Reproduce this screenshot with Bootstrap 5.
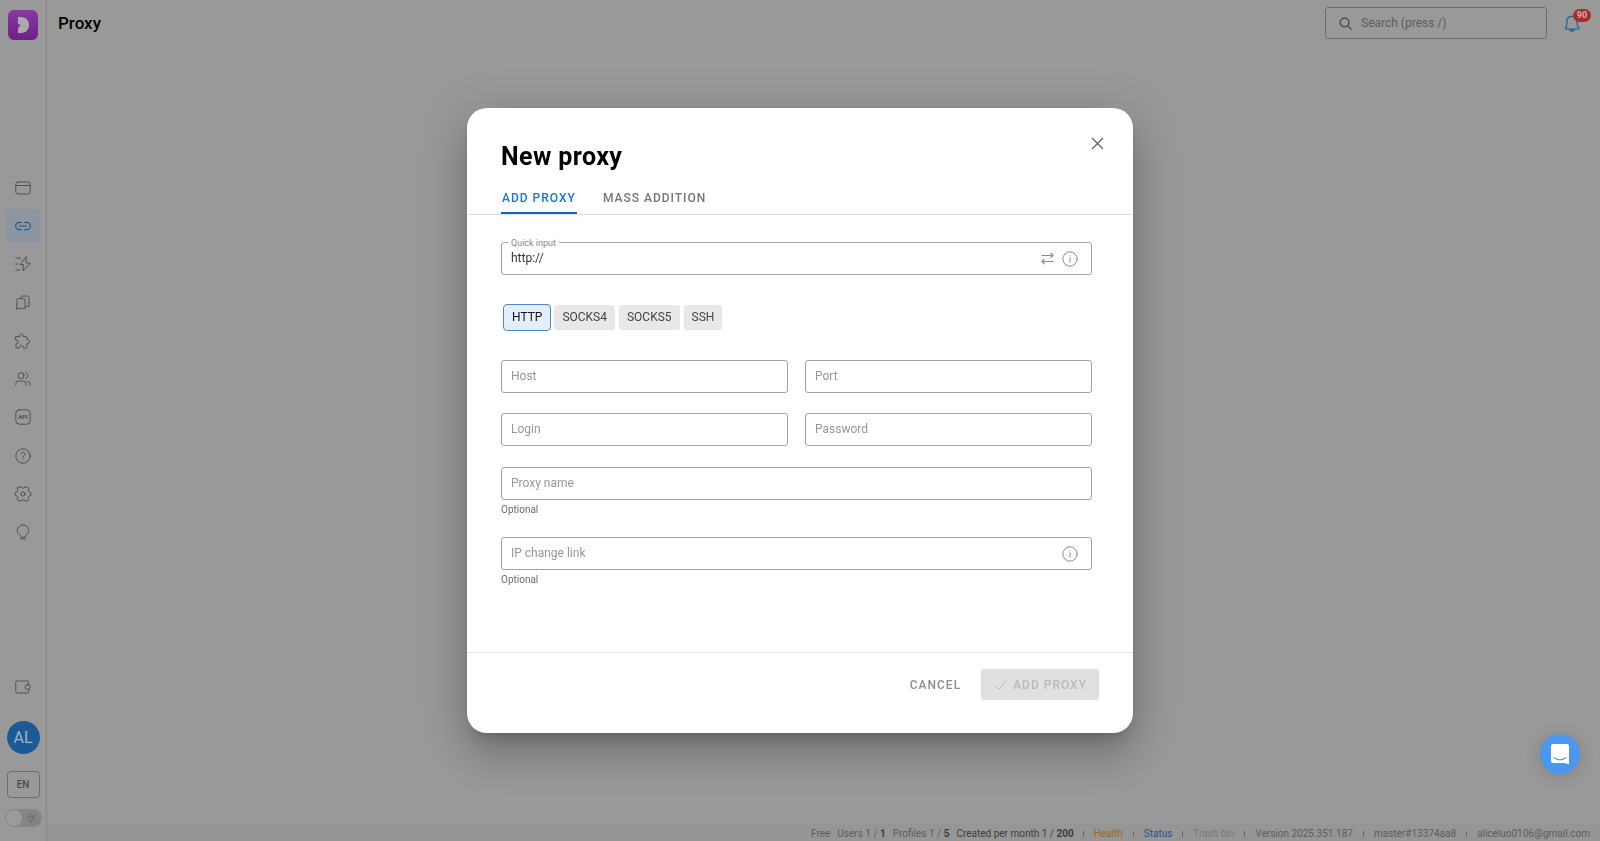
<!DOCTYPE html>
<html lang="en">
<head>
<meta charset="utf-8">
<meta name="viewport" content="width=device-width, initial-scale=1">
<title>Proxy</title>
<link href="https://cdn.jsdelivr.net/npm/bootstrap@5.3.0/dist/css/bootstrap.min.css" rel="stylesheet">
<style>
  body { font-family: Roboto, "Liberation Sans", sans-serif; font-size: 12px; line-height: 16px; background: #999; color: #000; }
  svg { display: block; fill: none; stroke: currentColor; stroke-linecap: round; stroke-linejoin: round; }
  .rail { width: 47px; border-right: 1px solid #868686; padding: 10px 0 14px; }
  .brand-tile { width: 30px; height: 30px; border-radius: 6px; background: linear-gradient(#8a37a6, #6f2088); }
  .rail-nav { margin-top: 131px; min-height: 378px; }
  .rail-link { width: 34px; height: 34px; color: #505050; border-radius: 3px; }
  .rail-link.active { background: #8b96a0; color: #20589c; }
  .avatar { width: 33px; height: 33px; background: #1c5a96; color: #a3b4c6; font-size: 16px; margin: 17px 0; }
  .lang-btn { width: 33px; height: 27px; border: 1px solid #6c6c6c; border-radius: 4px; background: none; color: #4a4a4a; font-size: 10px; font-weight: 500; margin-bottom: 11px; }
  .theme-switch { width: 37px; height: 18px; background: #858585; border-radius: 9px; padding: 1px; cursor: pointer; color: #666; }
  .theme-switch .knob { width: 16px; height: 16px; background: #9b9b9b; }
  .topbar { padding: 7px 9px 0 11px; }
  .page-title { font-size: 17px; line-height: 32px; font-weight: 500; }
  .search-box { width: 222px; height: 32px; border: 1px solid #6b6b6b; border-radius: 3px; padding: 0 13px; gap: 9px; color: #404040; }
  .search-box input { background: none; border: 0; outline: 0; padding: 0; min-width: 0; color: #222; }
  .search-box input::placeholder { color: #5c5c5c; opacity: 1; }
  .bell { background: none; border: 0; color: #20629f; padding: 0; margin-left: 17px; width: 27px; height: 32px; }
  .bell .count { position: absolute; top: 2px; right: 0; width: 18px; height: 13px; line-height: 13px; border-radius: 7px; background: #a92b2b; color: #ccb5b5; font-size: 9px; font-weight: 700; }
  .statusbar { background: #969696; height: 17px; font-size: 10px; line-height: 19px; color: #5c5c5c; padding-right: 10px; }
  .statusbar a { text-decoration: none; }
  .statusbar .usage { margin-right: 7px; }
  .statusbar .sep { width: 1px; height: 6px; background: #666; margin: 7px 10px 0; }
  .statusbar .usage + .sep { margin-left: 2px; }
  .dark-text { color: #3c3c3c; }
  .link-health { color: #9c651c; }
  .link-status { color: #1c548c; }
  .link-trash { color: #777; }
  .modal-dialog { max-width: 666px; }
  .modal-content { border: 0; border-radius: 20px; background: #fff; box-shadow: 0 11px 15px -7px rgba(0,0,0,.2), 0 24px 38px 3px rgba(0,0,0,.14), 0 9px 46px 8px rgba(0,0,0,.12); }
  .dialog-head { padding: 33px 34px 0; }
  .dialog-title { font-size: 25px; line-height: 32px; font-weight: 700; letter-spacing: .4px; }
  .close-btn { position: absolute; top: 27px; right: 27px; width: 17px; height: 17px; padding: 0; border: 0; background: none; color: #5c5c5c; }
  .dialog-tabs { border-bottom: 1px solid #e0e0e0; padding: 0 34px; gap: 25px; }
  .tab-btn { border: 0; border-bottom: 2px solid transparent; background: none; padding: 17px 1px 6px; line-height: 16px; font-weight: 500; letter-spacing: 1px; color: #757575; }
  .tab-btn.active { color: #1976d2; border-color: #1565c0; }
  .dialog-body { padding: 27px 41px 0 34px; min-height: 437px; }
  .field { height: 33px; border: 1px solid #a3a3a3; border-radius: 3px; padding: 0 13px 0 9px; gap: 8px; color: #8c8c8c; position: relative; }
  .field input { flex: 1; min-width: 0; border: 0; outline: 0; padding: 0 0 2px; background: none; color: #333; }
  .field input::placeholder { color: #979797; opacity: 1; }
  .field .float-label { position: absolute; top: -6px; left: 6px; padding: 0 3px; background: #fff; font-size: 9px; line-height: 12px; color: #888; }
  .hint { font-size: 10px; line-height: 14px; color: #6c6c6c; padding-top: 3px; }
  .chips { padding: 0 2px; gap: 2px; margin: 29px 0; }
  .chip { border: 1px solid transparent; border-radius: 4px; background: #e8e8e8 padding-box; color: #444; padding: 4px 8px 5px; line-height: 16px; cursor: pointer; }
  .btn-check:checked + .chip { background: #e3effa; border-color: #4a88c9; color: #111; }
  .pair { display: grid; grid-template-columns: 1fr 1fr; gap: 20px 17px; margin-bottom: 21px; }
  .dialog-foot { border-top: 1px solid #e3e3e3; padding: 16px 34px 33px; gap: 6px; }
  .act { border: 0; border-radius: 3px; height: 31px; padding: 0 14px; font-weight: 500; letter-spacing: 1px; background: none; color: #8f8f8f; }
  .act:disabled { background: #e0e0e0; color: #b9b9b9; padding: 0 12px 0 14px; gap: 6px; }
  .chat-btn { position: fixed; right: 20px; bottom: 67px; z-index: 1060; width: 40px; height: 40px; border: 0; background: #4b96ee; box-shadow: 0 2px 18px rgba(0,0,0,.16); }
</style>
</head>
<body>
<div class="d-flex min-vh-100">
  <aside class="rail d-flex flex-column align-items-center flex-shrink-0">
    <a href="#" class="brand-tile d-flex align-items-center justify-content-center" aria-label="Home">
      <svg width="14" height="18" viewBox="0 0 14 18"><path d="M2 1h3c5 0 8 3.500 8 8s-3 8-8 8H2v-5l2.500-2.500L1.500 7 2 6z" fill="#aaa" stroke="none"/></svg>
    </a>
    <nav class="rail-nav d-flex flex-column justify-content-between" aria-label="Main">
      <a href="#" class="rail-link d-flex align-items-center justify-content-center" aria-label="Browsers"><svg width="16" height="16" viewBox="0 0 16 16"><rect x=".8" y="2" width="14.400" height="12" rx="2.200"/><path d="M1 5.500h14"/></svg></a>
      <a href="#" class="rail-link active d-flex align-items-center justify-content-center" aria-label="Proxy"><svg width="16" height="16" viewBox="0 0 16 16" stroke-width="1.200"><path d="M6.300 4.400H4.200a3.600 3.600 0 0 0 0 7.200h2.100M9.700 4.400h2.100a3.600 3.600 0 0 1 0 7.200H9.700M4.500 8h7"/></svg></a>
      <a href="#" class="rail-link d-flex align-items-center justify-content-center" aria-label="Automation"><svg width="16" height="16" viewBox="0 0 16 16"><path d="M.8 2h4.700M.8 8h2.200M.8 14h3.700M11 1 5.200 8.600h3.200L8 15l7.200-8h-3.700z"/></svg></a>
      <a href="#" class="rail-link d-flex align-items-center justify-content-center" aria-label="Bookmarks"><svg width="16" height="16" viewBox="0 0 16 16"><path d="M2 5a1.400 1.400 0 0 1 1.400-1.400h5.200A1.400 1.400 0 0 1 10 5v9l-2-1-2 1-2-1-2 1zM6 3.500v-1A1.500 1.500 0 0 1 7.500 1h5A1.500 1.500 0 0 1 14 2.500V12l-1.600-.8-2.200.6"/></svg></a>
      <a href="#" class="rail-link d-flex align-items-center justify-content-center" aria-label="Extensions"><svg width="16" height="16" viewBox="0 0 16 16"><path d="M1 3.600h3.900C4.400 1.900 5.200 1 6.500 1s2.200.9 1.700 2.600H11q1 0 1 1v1.900c1.600 0 2.500.7 2.500 2s-.9 2-2.500 2v3q0 1.500-1.500 1.500H8.400c.2-1.700-.6-2.600-1.900-2.600s-2.100.9-1.900 2.600H1v-4.200c1.500.1 2.200-.7 2.200-1.900S2.500 7 1 7.100z"/></svg></a>
      <a href="#" class="rail-link d-flex align-items-center justify-content-center" aria-label="Team"><svg width="16" height="16" viewBox="0 0 16 16"><circle cx="6" cy="4.600" r="3"/><path d="M.8 14v-1.400A2.600 2.600 0 0 1 3.400 10h5a2.600 2.600 0 0 1 2.600 2.600V14M10.600 1.700a3 3 0 0 1 0 5.800M12.600 10.200a3 3 0 0 1 2.600 2.800v1"/></svg></a>
      <a href="#" class="rail-link d-flex align-items-center justify-content-center" aria-label="API"><svg width="16" height="16" viewBox="0 0 16 16"><rect x=".8" y=".8" width="14.400" height="14.400" rx="3.500"/><text x="8" y="10" text-anchor="middle" font-size="6" font-weight="700" fill="currentColor" stroke="none">API</text></svg></a>
      <a href="#" class="rail-link d-flex align-items-center justify-content-center" aria-label="Help"><svg width="16" height="16" viewBox="0 0 16 16"><circle cx="8" cy="8" r="7.200"/><path d="M6.100 6.100a1.900 1.900 0 1 1 2.900 1.600c-.7.400-1 .8-1 1.600M8 11.600v.1"/></svg></a>
      <a href="#" class="rail-link d-flex align-items-center justify-content-center" aria-label="Settings"><svg width="18" height="16" viewBox="-1 0 18 16"><circle cx="8" cy="8" r="2.100"/><path d="M3.700.9 5.600 1.200Q8 3.200 10.400 1.200l1.900-.3 1.300 1.500-.3 2.300q.4 1.600 2.600 2.100v2.400q-2.200.5-2.600 2.100l.3 2.300-1.300 1.500-1.900-.3Q8 12.800 5.600 14.800l-1.900.3-1.300-1.500.3-2.300Q2.300 9.700.1 9.200V6.800q2.200-.5 2.600-2.100l-.3-2.300z"/></svg></a>
      <a href="#" class="rail-link d-flex align-items-center justify-content-center" aria-label="Tips"><svg width="16" height="16" viewBox="0 0 16 16"><path d="M6 13v-1C4.300 10.800 2.300 9.200 2.300 6.600a5.700 5.700 0 0 1 11.400 0c0 2.600-2 4.200-3.700 5.400v1zM5.600 15h4.800"/></svg></a>
    </nav>
    <a href="#" class="rail-link mt-auto d-flex align-items-center justify-content-center" aria-label="Wallet"><svg width="16" height="16" viewBox="0 0 16 16"><path d="M13.600 5.600V3.200a1.200 1.200 0 0 0-1.200-1.200H2A1.200 1.200 0 0 0 .8 3.200v9.600A1.200 1.200 0 0 0 2 14h10.400a1.200 1.200 0 0 0 1.200-1.200v-2.400"/><rect x="10" y="5.700" width="5.400" height="4.600" rx="2.300"/></svg></a>
    <a href="#" class="avatar rounded-circle d-flex align-items-center justify-content-center text-decoration-none">AL</a>
    <button type="button" class="lang-btn p-0">EN</button>
    <label class="theme-switch d-flex align-items-center">
      <input type="checkbox" class="visually-hidden" aria-label="Dark theme">
      <span class="knob rounded-circle"></span>
      <svg class="ms-1" width="10" height="10" viewBox="0 0 10 10"><circle cx="5" cy="5" r="2"/><path d="M5 .5v1M5 8.500v1M.5 5h1M8.500 5h1M1.800 1.800l.7.7M7.500 7.500l.7.7M8.200 1.800l-.7.7M2.500 7.500l-.7.7"/></svg>
    </label>
  </aside>

  <div class="flex-grow-1 d-flex flex-column">
    <header class="topbar d-flex align-items-center">
      <h1 class="page-title m-0 me-auto">Proxy</h1>
      <label class="search-box d-flex align-items-center">
        <svg width="13" height="13" viewBox="0 0 13 13" stroke-width="1.200"><circle cx="5.500" cy="5.500" r="4.400"/><path d="m8.800 8.800 3.400 3.400"/></svg>
        <input type="search" placeholder="Search (press /)" aria-label="Search">
      </label>
      <button type="button" class="bell position-relative" aria-label="Notifications">
        <svg width="17" height="20" viewBox="0 0 17 20" stroke-width="1.300"><path d="M1.200 15.200c1.600-1 1.700-2.500 1.700-4.600V8.500c0-3 2-5.200 5.100-5.200s5.100 2.200 5.100 5.200v2.100c0 2.100.4 3.600 2 4.600-.6 1.400-13.300 1.400-13.900 0zM6 17c.4 1.600 3.600 1.600 4 0"/></svg>
        <span class="count text-center">90</span>
      </button>
    </header>
    <main class="flex-grow-1"></main>
    <footer class="statusbar d-flex justify-content-end">
      <span class="usage">Free</span><span class="usage">Users 1 / <b class="dark-text">1</b></span><span class="usage">Profiles 1 / <b class="dark-text">5</b></span><span class="usage dark-text">Created per month 1 / <b>200</b></span>
      <span class="sep"></span><a href="#" class="link-health">Health</a>
      <span class="sep"></span><a href="#" class="link-status">Status</a>
      <span class="sep"></span><a href="#" class="link-trash">Trash bin</a>
      <span class="sep"></span><span>Version 2025.351.187</span>
      <span class="sep"></span><span>master#13374aa8</span>
      <span class="sep"></span><span>aliceluo0106@gmail.com</span>
    </footer>
  </div>
</div>

<div class="modal d-block" tabindex="-1" role="dialog" aria-modal="true" aria-labelledby="dialogTitle">
  <div class="modal-dialog modal-dialog-centered">
    <form class="modal-content">
      <div class="dialog-head">
        <h2 class="dialog-title m-0" id="dialogTitle">New proxy</h2>
        <button type="button" class="close-btn" aria-label="Close"><svg width="17" height="17" viewBox="0 0 17 17" stroke-width="1.200"><path d="m3.500 3.500 10 10M13.500 3.500l-10 10"/></svg></button>
      </div>
      <div class="dialog-tabs d-flex" role="tablist">
        <button type="button" class="tab-btn active" role="tab" aria-selected="true">ADD PROXY</button>
        <button type="button" class="tab-btn" role="tab" aria-selected="false">MASS ADDITION</button>
      </div>
      <div class="dialog-body">
        <div class="field d-flex align-items-center">
          <label class="float-label" for="quick">Quick input</label>
          <input id="quick" type="text" value="http://">
          <svg width="13" height="13" viewBox="0 0 13 13" stroke-width="1.200"><path d="M1 3.500h11M9.800 1.200 12 3.500 9.800 5.700M12 9.500H1M3.200 7.300 1 9.500l2.200 2.300"/></svg>
          <svg width="16" height="16" viewBox="0 0 16 16"><circle cx="8" cy="8" r="7.200"/><path d="M8 7v4M8 4.800v.1"/></svg>
        </div>
        <div class="chips d-flex">
          <input class="btn-check" type="radio" name="type" id="tHttp" checked><label class="chip" for="tHttp">HTTP</label>
          <input class="btn-check" type="radio" name="type" id="tS4"><label class="chip" for="tS4">SOCKS4</label>
          <input class="btn-check" type="radio" name="type" id="tS5"><label class="chip" for="tS5">SOCKS5</label>
          <input class="btn-check" type="radio" name="type" id="tSsh"><label class="chip" for="tSsh">SSH</label>
        </div>
        <div class="pair">
          <div class="field d-flex align-items-center"><input type="text" placeholder="Host" aria-label="Host"></div>
          <div class="field d-flex align-items-center"><input type="text" placeholder="Port" aria-label="Port"></div>
          <div class="field d-flex align-items-center"><input type="text" placeholder="Login" aria-label="Login"></div>
          <div class="field d-flex align-items-center"><input type="password" placeholder="Password" aria-label="Password"></div>
        </div>
        <div class="field d-flex align-items-center"><input type="text" placeholder="Proxy name" aria-label="Proxy name"></div>
        <div class="hint mb-3 pb-1">Optional</div>
        <div class="field d-flex align-items-center">
          <input type="url" placeholder="IP change link" aria-label="IP change link">
          <svg width="16" height="16" viewBox="0 0 16 16"><circle cx="8" cy="8" r="7.200"/><path d="M8 7v4M8 4.800v.1"/></svg>
        </div>
        <div class="hint">Optional</div>
      </div>
      <div class="dialog-foot d-flex justify-content-end">
        <button type="button" class="act">CANCEL</button>
        <button type="submit" class="act d-flex align-items-center" disabled><svg width="12" height="12" viewBox="0 0 12 12"><path d="m1 7 3 3 7-8"/></svg>ADD PROXY</button>
      </div>
    </form>
  </div>
</div>

<button type="button" class="chat-btn rounded-circle d-flex align-items-center justify-content-center p-0" aria-label="Open chat">
  <svg width="18" height="21" viewBox="0 0 18 21"><path d="M2 0h14a2 2 0 0 1 2 2v18.500L13.500 19H2a2 2 0 0 1-2-2V2a2 2 0 0 1 2-2z" fill="#fff" stroke="none"/><path d="M3 13.800q6 4 12 0" stroke="#4b96ee" stroke-width="1.300"/></svg>
</button>
<script src="https://cdn.jsdelivr.net/npm/bootstrap@5.3.0/dist/js/bootstrap.bundle.min.js"></script>
</body>
</html>
